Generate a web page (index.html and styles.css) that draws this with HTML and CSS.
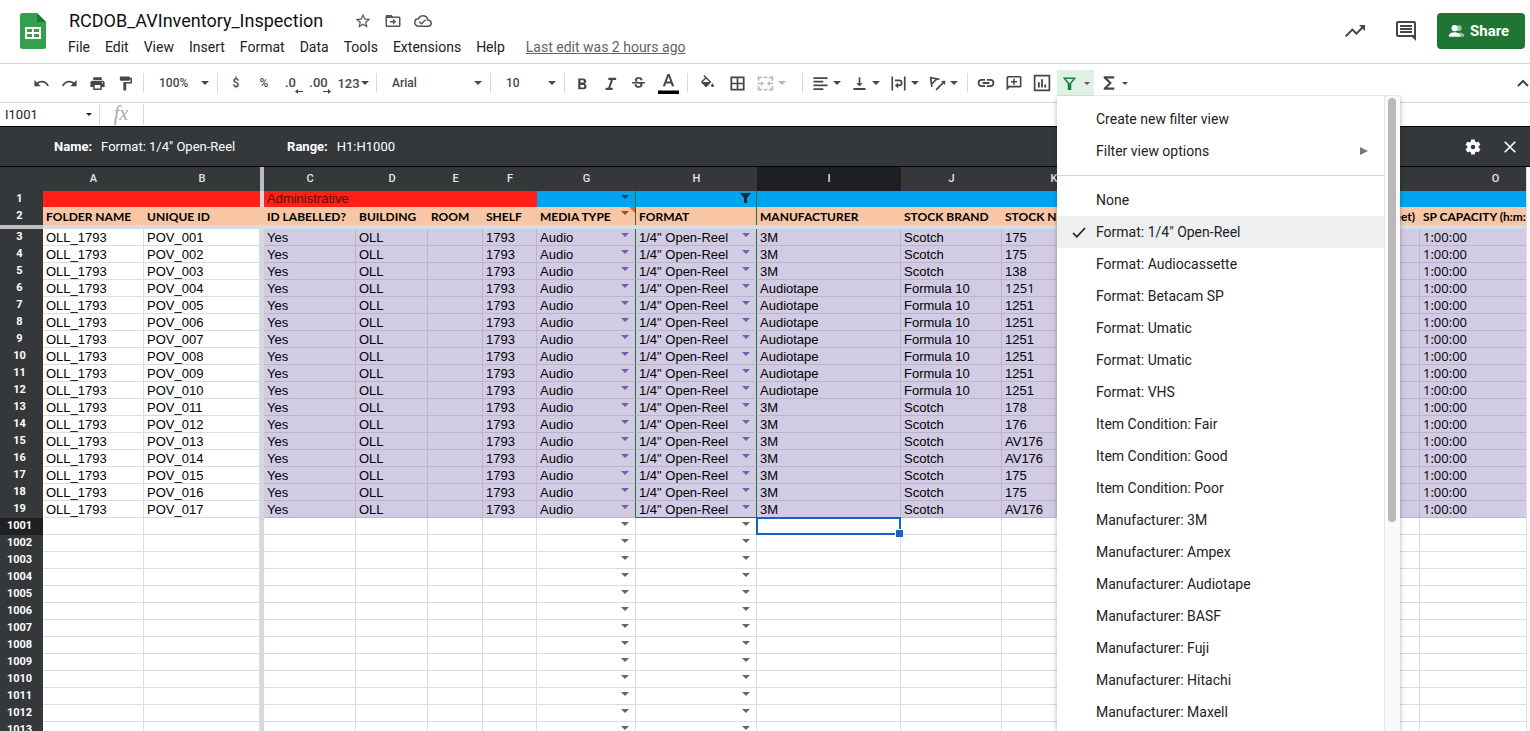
FILE: index.html
```html
<!DOCTYPE html>
<html lang="en">
<head>
<meta charset="utf-8">
<title>RCDOB_AVInventory_Inspection</title>
<link rel="stylesheet" href="styles.css">
</head>
<body>
<header class="top">
  <svg class="logo" viewBox="0 0 26 36"><path fill="#34a04b" d="M2.500 0H17l9 9v24.500a2.500 2.500 0 0 1-2.500 2.500h-21A2.500 2.500 0 0 1 0 33.500v-31A2.500 2.500 0 0 1 2.500 0z"/><path fill="#1b7a3a" d="M17 0l9 9h-9z"/><path fill="#fff" fill-rule="evenodd" d="M5 14h16v12H5zM7 16v3h5v-3zM14 16v3h5v-3zM7 21v3h5v-3zM14 21v3h5v-3z"/></svg>
  <div class="heading">
    <div class="title-row">
      <h1 class="title">RCDOB_AVInventory_Inspection</h1>
      <button class="mini" aria-label="Star"><svg viewBox="0 0 24 24"><path d="M22 9.240l-7.190-.62L12 2 9.190 8.630 2 9.240l5.460 4.730L5.820 21 12 17.270 18.180 21l-1.630-7.030L22 9.240zM12 15.400l-3.760 2.270 1-4.280-3.320-2.880 4.380-.38L12 6.100l1.710 4.040 4.380.38-3.320 2.880 1 4.280L12 15.400z"/></svg></button>
      <button class="mini" aria-label="Move"><svg viewBox="0 0 24 24"><path d="M20 6h-8l-2-2H4c-1.100 0-2 .9-2 2v12c0 1.100.9 2 2 2h16c1.100 0 2-.9 2-2V8c0-1.100-.9-2-2-2zm0 12H4V8h16v10zm-8-1l4-4-4-4v3H8v2h4z"/></svg></button>
      <button class="mini" aria-label="Document status"><svg viewBox="0 0 24 24"><path d="M19.350 10.040A7.490 7.490 0 0 0 12 4C9.110 4 6.600 5.640 5.350 8.040A5.994 5.994 0 0 0 0 14c0 3.310 2.690 6 6 6h13c2.760 0 5-2.240 5-5 0-2.640-2.050-4.780-4.650-4.960zM19 18H6c-2.210 0-4-1.790-4-4 0-2.050 1.530-3.760 3.560-3.970l1.070-.11.5-.95A5.469 5.469 0 0 1 12 6c2.620 0 4.880 1.860 5.390 4.430l.3 1.500 1.530.11A2.980 2.980 0 0 1 22 15c0 1.650-1.350 3-3 3zm-9-3.820l-2.090-2.090L6.500 13.500 10 17l6-6-1.400-1.420z"/></svg></button>
    </div>
    <nav class="menubar">
      <button>File</button><button>Edit</button><button>View</button><button>Insert</button><button>Format</button><button>Data</button><button>Tools</button><button>Extensions</button><button>Help</button>
      <a class="last-edit" href="#history">Last edit was 2 hours ago</a>
    </nav>
  </div>
  <div class="actions">
    <button class="act" aria-label="Activity"><svg viewBox="0 0 24 24"><path d="M16 6l2.290 2.290-4.880 4.880-4-4L2 16.590 3.410 18l6-6 4 4 6.300-6.290L22 12V6z"/></svg></button>
    <button class="act" aria-label="Comments"><svg viewBox="0 0 24 24"><path d="M21.990 4c0-1.100-.89-2-1.990-2H4c-1.100 0-2 .9-2 2v12c0 1.100.9 2 2 2h14l4 4-.01-18zM20 4v12H4V4h16zM6 12h12v2H6zm0-3h12v2H6zm0-3h12v2H6z"/></svg></button>
    <button class="share"><svg viewBox="0 0 18 14"><circle cx="11.500" cy="4" r="3" opacity=".55"/><path opacity=".55" d="M12 8.500c3 .3 5 1.500 5 3V13h-4z"/><circle cx="7" cy="4" r="3.300"/><path d="M1 11.800c0-2.200 3.600-3.500 6-3.500s6 1.300 6 3.500V13H1z"/></svg>Share</button>
  </div>
</header>

<div class="toolbar">
  <div class="group history">
    <button class="tool" aria-label="Undo"><svg viewBox="0 0 24 24"><path d="M12.500 8c-2.650 0-5.050.99-6.900 2.600L2 7v9h9l-3.620-3.620c1.390-1.160 3.160-1.880 5.120-1.880 3.540 0 6.550 2.310 7.600 5.500l2.370-.78C21.080 11.030 17.150 8 12.500 8z"/></svg></button>
    <button class="tool" aria-label="Redo"><svg viewBox="0 0 24 24"><path d="M18.400 10.600C16.550 8.990 14.150 8 11.500 8c-4.650 0-8.580 3.030-9.960 7.220L3.900 16c1.050-3.190 4.050-5.500 7.600-5.500 1.950 0 3.730.72 5.120 1.880L13 16h9V7l-3.600 3.600z"/></svg></button>
    <button class="tool" aria-label="Print"><svg viewBox="0 0 24 24"><path d="M19 8H5c-1.660 0-3 1.340-3 3v6h4v4h12v-4h4v-6c0-1.660-1.340-3-3-3zm-3 11H8v-5h8v5zm3-7c-.55 0-1-.45-1-1s.45-1 1-1 1 .45 1 1-.45 1-1 1zm-1-9H6v4h12V3z"/></svg></button>
    <button class="tool" aria-label="Paint format"><svg viewBox="0 0 24 24"><path d="M18 4V3c0-.55-.45-1-1-1H5c-.55 0-1 .45-1 1v4c0 .55.45 1 1 1h12c.55 0 1-.45 1-1V6h1v4H9v11c0 .55.45 1 1 1h2c.55 0 1-.45 1-1v-9h8V4h-3z"/></svg></button>
  </div>
  <div class="group zoom"><select aria-label="Zoom"><option>100%</option></select></div>
  <div class="group numbers">
    <button class="tool">$</button><button class="tool">%</button>
    <button class="tool dec" aria-label="Decrease decimal places">.0<svg viewBox="0 0 8 5"><path d="M3 0v2h5v1H3v2L0 2.500z"/></svg></button>
    <button class="tool dec" aria-label="Increase decimal places">.00<svg viewBox="0 0 8 5"><path d="M5 0v2H0v1h5v2l3-2.500z"/></svg></button>
    <button class="tool more">123<i class="arrow"></i></button>
  </div>
  <div class="group font"><select aria-label="Font"><option>Arial</option></select></div>
  <div class="group size"><select aria-label="Font size"><option>10</option></select></div>
  <div class="group text">
    <button class="tool" aria-label="Bold"><svg viewBox="0 0 24 24"><path d="M15.600 11.790c.97-.67 1.650-1.770 1.650-2.790 0-2.260-1.750-4-4-4H6v15h8.040c2.090 0 3.710-1.700 3.710-3.790 0-1.520-.86-2.820-2.150-3.420zM9 7.500h3.500c.83 0 1.500.67 1.500 1.500s-.67 1.500-1.500 1.500H9v-3zm4 10H9V14h4c.83 0 1.500.67 1.500 1.750s-.67 1.750-1.500 1.750z"/></svg></button>
    <button class="tool" aria-label="Italic"><svg viewBox="0 0 24 24"><path d="M9 4v3h3.500l-3.800 11H5v3h10v-3h-3.300l3.800-11H20V4z"/></svg></button>
    <button class="tool" aria-label="Strikethrough"><svg viewBox="0 0 24 24"><path d="M7.240 8.750c-.26-.48-.39-1.030-.39-1.670 0-.61.130-1.160.4-1.670.26-.5.630-.93 1.110-1.290a5.730 5.730 0 0 1 1.700-.83c.66-.19 1.390-.29 2.180-.29.810 0 1.540.11 2.210.34.66.22 1.230.54 1.690.94.47.4.830.88 1.080 1.430s.38 1.150.38 1.810h-3.010c0-.31-.05-.59-.15-.85-.09-.27-.24-.49-.44-.68-.2-.19-.45-.33-.75-.44-.3-.1-.66-.16-1.060-.16-.39 0-.74.04-1.030.13s-.53.21-.72.36c-.19.16-.34.34-.44.55-.1.21-.15.43-.15.66 0 .48.250.88.740 1.210.38.250.77.480 1.410.7H7.390c-.05-.08-.11-.17-.15-.25zM21 12v-2H3v2h9.620c.18.070.4.140.55.200.37.170.66.340.87.510s.35.360.43.570c.07.200.11.430.11.690 0 .23-.05.45-.14.660-.09.200-.23.380-.42.530-.19.150-.42.260-.71.350-.29.080-.63.130-1.010.13-.43 0-.83-.04-1.180-.13s-.66-.23-.91-.42c-.25-.19-.45-.44-.59-.75s-.25-.76-.25-1.210H6.400c0 .55.080 1.130.24 1.580s.37.850.65 1.210c.28.350.6.660.98.920.37.260.78.480 1.220.65.440.17.900.30 1.380.39.48.08.960.13 1.440.13.800 0 1.530-.09 2.180-.28s1.210-.45 1.670-.79c.46-.34.820-.77 1.070-1.270s.38-1.070.38-1.710c0-.6-.1-1.140-.31-1.610-.05-.11-.11-.23-.17-.33H21z"/></svg></button>
    <button class="tool color" aria-label="Text color"><svg viewBox="0 0 24 24"><path d="M10.800 1L5.500 15h2.600l1.100-3h5.600l1.100 3h2.600L13.200 1zM10 9.800L12 4l2 5.800z"/><path fill="#000" d="M0 20h24v4H0z"/></svg></button>
  </div>
  <div class="group cells">
    <button class="tool" aria-label="Fill color"><svg viewBox="0 0 24 24"><path d="M16.560 8.940L7.620 0 6.210 1.410l2.380 2.380-5.150 5.150a1.490 1.490 0 0 0 0 2.120l5.500 5.500c.29.290.68.440 1.060.44s.77-.15 1.060-.44l5.500-5.500c.59-.58.590-1.530 0-2.120zM5.210 10L10 5.210 14.790 10zM19 11.500s-2 2.170-2 3.500c0 1.100.9 2 2 2s2-.9 2-2c0-1.330-2-3.500-2-3.500z"/></svg></button>
    <button class="tool" aria-label="Borders"><svg viewBox="0 0 24 24"><path d="M2 2v20h20V2H2zm8.800 17.500H4.500v-6.300h6.300v6.300zm0-8.700H4.500V4.500h6.300v6.300zm8.700 8.700h-6.300v-6.300h6.300v6.300zm0-8.700h-6.300V4.500h6.300v6.300z"/></svg></button>
    <button class="tool pair off" aria-label="Merge cells"><svg viewBox="0 0 24 24"><path d="M1 2h6v2.500H3.500V8H1zM9.500 2h5v2.500h-5zM17 2h6v6h-2.500V4.500H17zM1 16h2.500v3.500H7V22H1zM9.500 19.500h5V22h-5zM20.500 16H23v6h-6v-2.500h3.500zM1 11h5V8.500l4 3.500-4 3.500V13H1zM23 11h-5V8.500L14 12l4 3.500V13h5z"/></svg><i class="arrow"></i></button>
  </div>
  <div class="group align">
    <button class="tool pair" aria-label="Horizontal align"><svg viewBox="0 0 24 24"><path d="M2 3h20v2.500H2zM2 8.200h14v2.500H2zM2 13.400h20v2.500H2zM2 18.600h14v2.500H2z"/></svg><i class="arrow"></i></button>
    <button class="tool pair" aria-label="Vertical align"><svg viewBox="0 0 24 24"><path d="M16.500 11.500h-3.300V3h-2.400v8.500H7.500L12 16zM3.500 18.500V21h17v-2.500z"/></svg><i class="arrow"></i></button>
    <button class="tool pair" aria-label="Text wrapping"><svg viewBox="0 0 24 24"><path d="M2 2h2.400v20H2zM19.600 2H22v20h-2.400zM7 6.500h6a4.700 4.700 0 0 1 0 9.400h-1.500V19L7 14.800l4.500-4.300v3H13a2.300 2.300 0 0 0 0-4.600H7z"/></svg><i class="arrow"></i></button>
    <button class="tool pair" aria-label="Text rotation"><svg viewBox="0 0 24 24"><path d="M1 3.200l1.900 14 2.300-.9-.5-3 6.700-6.700 3 .6.900-2.300-14-2.300zm3.500 7.300L3.700 5.300l5.200.8zM23 8l-6.200.3 2.100 2.100-9.700 9.700 1.700 1.700 9.700-9.700 2.100 2.100z"/></svg><i class="arrow"></i></button>
  </div>
  <div class="group insert">
    <button class="tool" aria-label="Insert link"><svg viewBox="0 0 24 24"><path d="M3.200 12c0-1.700 1.400-3.100 3.100-3.100h4.500V6.600H6.300a5.400 5.400 0 0 0 0 10.800h4.500v-2.300H6.300A3.100 3.100 0 0 1 3.200 12zM7.500 13.200h9v-2.400h-9zM17.700 6.600h-4.500v2.300h4.500a3.100 3.100 0 0 1 0 6.200h-4.500v2.300h4.500a5.400 5.400 0 0 0 0-10.800z"/></svg></button>
    <button class="tool" aria-label="Insert comment"><svg viewBox="0 0 24 24"><path d="M20 2.500H4a2 2 0 0 0-2 2V22l4-4h14a2 2 0 0 0 2-2V4.500a2 2 0 0 0-2-2zm-.2 13.300H4.200V4.700h15.600zM11 14.300h2v-3h3v-2h-3v-3h-2v3H8v2h3z"/></svg></button>
    <button class="tool" aria-label="Insert chart"><svg viewBox="0 0 24 24"><path d="M1 1v22h22V1zm19.700 19.700H3.300V3.300h17.400zM6.500 11H9v7H6.500zM10.800 7h2.400v11h-2.400zM15 14h2.500v4H15z"/></svg></button>
    <div class="filter">
      <button class="tool pair on" aria-label="Filter views" aria-expanded="true"><svg viewBox="0 0 24 24"><path fill-rule="evenodd" d="M2.500 3.500l7 9V21h5v-8.500l7-9zM7 5.700h10l-4.700 6h-.6z"/></svg><i class="arrow small"></i></button>
      <div class="menu">
        <div class="menu-list" role="menu">
          <button role="menuitem">Create new filter view</button>
          <button role="menuitem">Filter view options<i class="submenu"></i></button>
          <hr>
          <button role="menuitem">None</button>
          <button role="menuitem" class="checked"><svg viewBox="0 0 14 11"><path d="M1 6l3.800 3.800L13 1" fill="none" stroke="#222" stroke-width="1.700"/></svg>Format: 1/4" Open-Reel</button>
          <button role="menuitem">Format: Audiocassette</button>
          <button role="menuitem">Format: Betacam SP</button>
          <button role="menuitem">Format: Umatic</button>
          <button role="menuitem">Format: Umatic</button>
          <button role="menuitem">Format: VHS</button>
          <button role="menuitem">Item Condition: Fair</button>
          <button role="menuitem">Item Condition: Good</button>
          <button role="menuitem">Item Condition: Poor</button>
          <button role="menuitem">Manufacturer: 3M</button>
          <button role="menuitem">Manufacturer: Ampex</button>
          <button role="menuitem">Manufacturer: Audiotape</button>
          <button role="menuitem">Manufacturer: BASF</button>
          <button role="menuitem">Manufacturer: Fuji</button>
          <button role="menuitem">Manufacturer: Hitachi</button>
          <button role="menuitem">Manufacturer: Maxell</button>
        </div>
        <div class="scroll"><div class="thumb"></div></div>
      </div>
    </div>
    <button class="tool pair" aria-label="Functions"><svg viewBox="0 0 24 24"><path d="M19 3H5v2.500l7 6.500-7 6.500V21h14v-3H9.800l6-6-6-6H19z"/></svg><i class="arrow small"></i></button>
  </div>
  <button class="collapse" aria-label="Hide the menus"><svg viewBox="0 0 12 8"><path d="M1 7l5-5 5 5" fill="none" stroke="#444" stroke-width="2"/></svg></button>
</div>

<div class="formula">
  <input class="cell-name" aria-label="Name box" value="I1001">
  <button class="name-open" aria-label="Named ranges"><i class="arrow small"></i></button>
  <span class="fx">fx</span>
  <input class="formula-text" aria-label="Formula">
</div>

<div class="view-bar">
  <label for="view-name">Name:</label><input id="view-name" class="view-name" value='Format: 1/4" Open-Reel'>
  <label for="view-range">Range:</label><input id="view-range" class="view-range" value="H1:H1000">
  <div class="view-actions">
    <button aria-label="Options"><svg viewBox="0 0 24 24"><path d="M19.430 12.980c.04-.32.070-.64.070-.98s-.03-.66-.07-.98l2.110-1.650c.19-.15.240-.42.120-.64l-2-3.460c-.12-.22-.39-.3-.61-.22l-2.490 1c-.52-.4-1.080-.73-1.690-.98l-.38-2.650C14.460 2.180 14.250 2 14 2h-4c-.25 0-.46.180-.49.420l-.38 2.650c-.61.250-1.170.590-1.690.98l-2.490-1c-.23-.09-.49 0-.61.220l-2 3.460c-.13.220-.07.490.12.640l2.110 1.650c-.04.320-.07.650-.07.980s.03.660.070.98l-2.110 1.650c-.19.150-.24.420-.12.640l2 3.460c.12.220.39.300.61.220l2.490-1c.52.400 1.080.730 1.690.98l.38 2.650c.03.240.24.420.49.420h4c.25 0 .46-.18.49-.42l.38-2.650c.61-.25 1.170-.59 1.690-.98l2.490 1c.23.090.49 0 .61-.22l2-3.460c.12-.22.070-.49-.12-.64zM12 15a3 3 0 1 1 0-6 3 3 0 0 1 0 6z"/></svg></button>
    <button aria-label="Close"><svg viewBox="0 0 24 24"><path d="M5 5l14 14M19 5L5 19" fill="none" stroke="#fff" stroke-width="2.200"/></svg></button>
  </div>
</div>

<main class="sheet"><table class="grid" id="grid"></table></main>
<script src="script.js"></script>
</body>
</html>
```
FILE: styles.css
```css
* { box-sizing: border-box; }
html, body { height: 100%; }
body { margin: 0; display: flex; flex-direction: column; overflow: hidden; background: #fff; font-family: Roboto, "Liberation Sans", sans-serif; color: #222; }
button, input, select { font: inherit; color: inherit; border: 0; background: none; padding: 0; margin: 0; outline: 0; }
svg { display: block; fill: currentColor; }

.top { flex: none; display: flex; align-items: flex-start; height: 64px; padding: 0 5px 0 20px; border-bottom: 1px solid #d5d7d9; }
.logo { width: 26px; height: 36px; margin-top: 13px; }
.heading { margin: 8px 0 0 22px; }
.title-row { display: flex; align-items: center; height: 25px; }
.title { margin: 0 31px 0 1px; font-size: 18px; font-weight: 400; color: #111; line-height: 25px; }
.mini { width: 18px; margin-right: 12px; color: #555; }
.mini svg { width: 18px; height: 18px; }
.menubar { display: flex; align-items: center; gap: 15px; height: 28px; font-size: 14px; }
.last-edit { margin-left: 6px; color: #5f6368; }
.actions { display: flex; align-items: center; margin: 13px 0 0 auto; color: #444746; }
.act { margin-right: 27px; }
.act svg { width: 24px; height: 24px; }
.act + .act { margin-right: 19px; }
.share { display: flex; align-items: center; gap: 5px; width: 88px; height: 36px; padding-left: 11px; border-radius: 4px; background: #1f7532; color: #fff; font-size: 15px; line-height: 16px; font-weight: 700; }
.share svg { width: 17px; height: 14px; }

.toolbar { flex: none; display: flex; align-items: center; height: 39px; padding-left: 27px; border-bottom: 1px solid #d5d7d9; color: #444746; font-size: 13px; position: relative; z-index: 2; }
.group { display: flex; align-items: center; height: 20px; border-right: 1px solid #d8dadc; }
.tool { display: flex; align-items: center; justify-content: center; width: 28px; height: 26px; flex: none; }
.tool svg { width: 17px; height: 17px; }
.arrow { flex: none; width: 0; height: 0; border: 4px solid transparent; border-top-color: currentColor; border-bottom: 0; }
.arrow.small { border-width: 3px; border-bottom: 0; }
.pair { width: 39px; gap: 4px; }
.off { color: #b5b7b9; }
.history { width: 117px; }
.zoom, .font, .size { position: relative; font-weight: 500; font-size: 12px; }
.zoom::after, .font::after, .size::after { content: ""; position: absolute; right: 8px; top: 8px; border: 4px solid transparent; border-top-color: #444746; border-bottom: 0; pointer-events: none; }
.group select { appearance: none; width: 100%; padding-left: 15px; }
.zoom { width: 74px; }
.numbers { width: 159px; padding-left: 4px; font-weight: 500; font-size: 12px; }
.dec { position: relative; font-size: 13px; padding: 0 3px 1px 0; }
.dec svg { position: absolute; right: 3px; bottom: 2px; width: 8px; height: 5px; }
.more { width: 38px; gap: 1px; font-size: 13px; }
.font { width: 114px; }
.size { width: 74px; }
.text { width: 123px; padding-left: 3px; }
.text .color { width: 32px; }
.text .color svg { width: 21px; height: 21px; }
.cells { width: 115px; padding-left: 5px; gap: 2px; }
.cells .pair { width: 37px; }
.align { width: 165px; padding-left: 4px; }
.insert { padding-left: 4px; border: 0; }
.insert > .tool svg { width: 18px; height: 18px; }
.filter { position: relative; margin-left: 1px; }
.filter .pair { width: 37px; gap: 6px; }
.filter .on { color: #188038; background: #dff1e4; }
.filter .on .arrow { color: #555; }
.collapse { margin-left: auto; margin-right: 1px; }
.collapse svg { width: 12px; height: 8px; }

.menu { position: absolute; top: 26px; left: 0; width: 343px; height: calc(100vh - 96px); display: flex; overflow: hidden; background: #fff; box-shadow: 0 1px 5px rgba(0, 0, 0, .3); clip-path: inset(-1px -6px 0 -6px); color: #222; font-size: 14px; }
.menu-list { flex: 1; display: flex; flex-direction: column; padding-top: 7px; }
.menu-list button { flex: none; position: relative; height: 32px; padding: 0 20px 0 39px; text-align: left; }
.menu-list hr { flex: none; width: 100%; margin: 8px 0; border: 0; border-top: 1px solid #d5d7d9; }
.menu-list .checked { background: #eeeff1; }
.checked svg { position: absolute; left: 15px; top: 11px; width: 14px; height: 11px; }
.submenu { position: absolute; right: 16px; top: 12px; border: 4px solid transparent; border-left: 8px solid #777; border-right: 0; }
.scroll { flex: none; width: 16px; padding: 2px 4px 0 3px; border-left: 1px solid #e5e5e5; background: #fafafa; }
.thumb { height: 67%; border-radius: 4px; background: #b9b9b9; }

.formula { flex: none; display: flex; align-items: center; height: 23px; font-size: 13px; }
.cell-name { width: 80px; padding-left: 5px; }
.name-open { display: flex; align-items: center; width: 20px; height: 21px; padding-left: 6px; border-right: 1px solid #d5d7d9; }
.fx { width: 44px; height: 21px; padding-right: 1px; text-align: center; font: italic 20px/18px "Liberation Serif", serif; color: #aaa; border-right: 1px solid #d5d7d9; }
.formula-text { flex: 1; }

.view-bar { flex: none; display: flex; align-items: center; height: 41px; padding-left: 54px; border: 1px solid #000; border-width: 1px 0; background: #35383b; color: #fff; font-size: 13px; }
.view-bar label { font-weight: 700; }
.view-name { width: 186px; margin-left: 9px; }
.view-range { width: 90px; margin-left: 9px; }
.view-actions { display: flex; gap: 19px; margin-left: auto; margin-right: 11px; }
.view-actions svg { width: 18px; height: 18px; }

.sheet { flex: 1; min-height: 0; margin-right: 3px; overflow: hidden; border-right: 1px solid #ddd; }
.grid { table-layout: fixed; border-collapse: separate; border-spacing: 0; width: 1571px; font: 13px/15px "Liberation Sans", Arial, sans-serif; color: #000; }
.grid th { padding: 0; background: #35383b; color: #fff; font: 500 11px/12px Roboto, sans-serif; text-align: center; }
.grid thead th { height: 24px; padding-bottom: 1px; color: #e6e6e6; }
.grid thead .current, .grid tbody .current { background: #1d1f21; }
.grid tbody th { padding: 0 4px 1px 0; font-weight: 700; }
.grid td { position: relative; height: 17px; padding: 0 0 0 3px; border: 1px solid #dcdcdc; border-width: 0 1px 1px 0; white-space: nowrap; overflow: hidden; }
.grid .edge { padding: 0; border: 0; background: #d3d9df; }
.grid thead .edge { background: #bdbdbd; }
.grid .freeze td { height: 4px; padding: 0; border: 0; background: #d7dce3; }
.grid .freeze th { padding: 0; background: #bdbdbd; }
.grid .band td { height: 16px; line-height: 14px; border: 0; overflow: visible; color: #5a0c08; }
.grid .red { background: #ff2116; }
.grid .blue { background: #00a4ee; }
.grid .labels td { height: 18px; border: 0; background: #f8c6a4; font: 700 12px/17px Lato, sans-serif; }
.grid .labels .end { text-align: right; padding-right: 5px; }
.grid .fill { background: #d2cbe4; border-color: #bab4cd; }
.grid td.left-range, .grid td.range { border-right: 1px solid #1e7045; }
.grid td.range-end { border-bottom-color: #1e7045; }
.grid .blank.left-range, .grid .blank.range { border-right-color: #dcdcdc; }
.grid .alt { font-family: "Open Sans", sans-serif; }
.drop::after { content: ""; position: absolute; right: 6px; top: 4px; border: 4px solid transparent; border-top-color: #666; border-bottom: 0; }
.fill.drop::after { border-top-color: #6e5fb4; }
.blue.drop::after { border-top-color: #14425e; }
.labels .drop::after { border-top-color: #a04a1e; }
.funnel { position: absolute; right: 5px; top: 2px; width: 11px; height: 10px; fill: #1d2b33; }
.note { position: absolute; right: 0; top: 0; border: 3px solid transparent; border-top-color: #f0592b; border-right-color: #f0592b; }
.grid td.selected { overflow: visible; }
.cursor { position: absolute; inset: -1px; border: 2px solid #1760c4; z-index: 1; }
.cursor::after { content: ""; position: absolute; right: -4px; bottom: -4px; width: 7px; height: 7px; border: 1px solid #fff; border-width: 1px 0 0 1px; background: #1760c4; }
```
FILE: script.js
```js
const letters = ["A", "B", "C", "D", "E", "F", "G", "H", "I", "J", "K", "L", "M", "N", "O"];
const widths = [101, 116, 92, 72, 55, 54, 99, 121, 144, 101, 104, 104, 105, 105, 151];
const titles = ["FOLDER NAME", "UNIQUE ID", "ID LABELLED?", "BUILDING", "ROOM", "SHELF", "MEDIA TYPE", "FORMAT", "MANUFACTURER", "STOCK BRAND", "STOCK NUMBER", "", "", "(feet)", "SP CAPACITY (h:m:s)"];
const tapes = [
  ["3M", "Scotch", "175"], ["3M", "Scotch", "175"], ["3M", "Scotch", "138"],
  ...["1251", "1251", "1251", "1251", "1251", "1251", "1251"].map(n => ["Audiotape", "Formula 10", n]),
  ["3M", "Scotch", "178"], ["3M", "Scotch", "176"], ["3M", "Scotch", "AV176"], ["3M", "Scotch", "AV176"],
  ["3M", "Scotch", "175"], ["3M", "Scotch", "175"], ["3M", "Scotch", "AV176"]
];
const funnel = '<svg class="funnel" viewBox="0 0 11 10"><path d="M0 0h11L7 5v5H4V5z"/></svg>';

const td = (text, cls) => `<td class="${cls}">${text}</td>`;

// Joins a row's cells, with the frozen-pane edge after column B.
function row(head, cells, cls = "", headClass = "") {
  return `<tr class="${cls}"><th scope="row" class="${headClass}">${head}</th>${cells.slice(0, 2).join("")}<td class="edge"></td>${cells.slice(2).join("")}</tr>`;
}

const rangeClass = i => (i === 6 ? " left-range" : i === 7 ? " range" : "");

const cols = [43, ...widths.slice(0, 2), 4, ...widths.slice(2)];
let html = "<colgroup>" + cols.map(w => `<col style="width:${w}px">`).join("") + "</colgroup>";

const heads = letters.map(l => `<th scope="col" class="${l === "I" ? "current" : ""}">${l}</th>`);
html += `<thead><tr><th></th>${heads.slice(0, 2).join("")}<th class="edge"></th>${heads.slice(2).join("")}</tr></thead><tbody>`;

html += row(1, letters.map((l, i) =>
  td(i === 2 ? "Administrative" : i === 7 ? funnel : "", (i < 6 ? "red" : "blue") + (i === 6 ? " drop" : "") + rangeClass(i))), "band");
html += row(2, titles.map((t, i) =>
  td(t + (i === 6 ? '<i class="note"></i>' : ""), (i === 6 ? "drop" : i === 13 ? "end" : "") + rangeClass(i))), "labels");
html += row("", letters.map(() => td("", "")), "freeze");

tapes.forEach((tape, n) => {
  const values = ["OLL_1793", "POV_" + String(n + 1).padStart(3, "0"), "Yes", "OLL", "", "1793", "Audio", '1/4" Open-Reel', ...tape, "", "", "", "1:00:00"];
  html += row(n + 3, values.map((v, i) => {
    let cls = i > 1 ? "fill" : "";
    if (i === 6 || i === 7) cls += " drop";
    if (i === 14 || (i === 10 && n === 3)) cls += " alt";
    if (i === 7 && n === tapes.length - 1) cls += " range-end";
    return td(v, cls + rangeClass(i));
  }));
});

for (let n = 1001; n <= 1013; n++) {
  html += row(n, letters.map((l, i) => {
    const here = n === 1001 && i === 8;
    return td(here ? '<span class="cursor"></span>' : "", here ? "selected" : i === 6 || i === 7 ? "drop" : "");
  }), "", n === 1001 ? "current" : "");
}

document.getElementById("grid").innerHTML = html + "</tbody>";
```
